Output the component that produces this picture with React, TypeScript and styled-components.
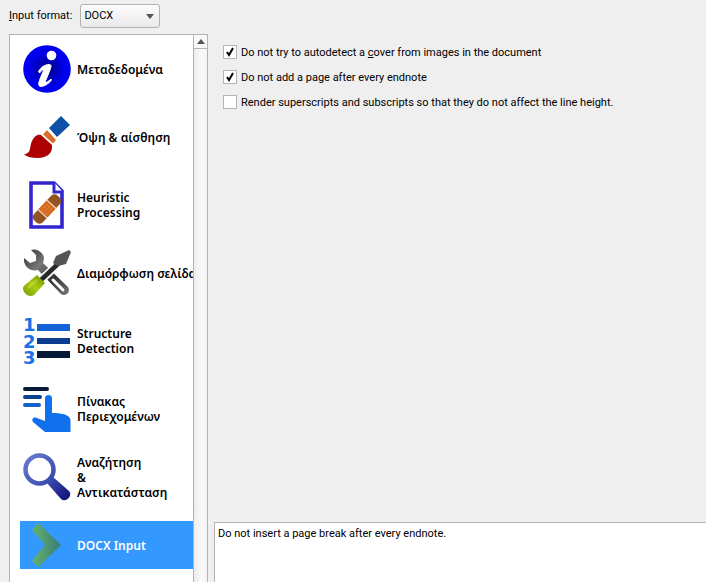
import React, { useState } from "react";
import styled, { createGlobalStyle } from "styled-components";

const GlobalStyle = createGlobalStyle`
  * { box-sizing: border-box; }
  body {
    margin: 0;
    overflow: hidden;
    background: #efefef;
    color: #000;
    font: 11px/16px Roboto, "DejaVu Sans", sans-serif;
  }
`;

const Dialog = styled.div`
  display: flex;
  flex-direction: column;
  height: 100vh;
`;

const FormatBar = styled.div`
  display: flex;
  align-items: center;
  gap: 8px;
  height: 34px;
  padding: 0 9px 2px;
`;

const SelectBox = styled.div`
  display: grid;
  align-items: center;
  width: 80px;
  > * { grid-area: 1 / 1; }
  svg { justify-self: end; margin-right: 6px; pointer-events: none; }
`;

const Select = styled.select`
  appearance: none;
  width: 100%;
  height: 24px;
  padding: 0 3px;
  border: 1px solid #b2b2b2;
  border-radius: 3px;
  background: linear-gradient(#fcfcfc, #eaeaea);
  color: #000;
  font: inherit;
`;

const Body = styled.div`
  display: flex;
  flex: 1;
  min-height: 0;
  gap: 6px;
  padding-left: 9px;
`;

const Sidebar = styled.div`
  display: flex;
  flex: none;
  width: 199px;
  border: 1px solid #b4b4b4;
  border-bottom: 0;
  background: #fff;
`;

const PageList = styled.nav`
  display: flex;
  flex: 1;
  flex-direction: column;
  gap: 20px;
  min-width: 0;
  padding: 10px 0 0 10px;
  overflow: hidden;
`;

const PageButton = styled.button<{ $selected: boolean }>`
  display: flex;
  flex: none;
  align-items: center;
  gap: 6px;
  height: 48px;
  padding: 0 0 0 3px;
  border: 0;
  background: ${({ $selected }) => ($selected ? "#3399ff" : "transparent")};
  color: ${({ $selected }) => ($selected ? "#fff" : "#000")};
  font: 600 12px/15px "Noto Sans", "Open Sans", sans-serif;
  text-align: left;
  white-space: pre;
  svg { flex: none; overflow: visible; }
`;

const ScrollBar = styled.div`
  flex: none;
  width: 14px;
  border-left: 1px solid #b4b4b4;
  background: linear-gradient(to right, #ececec, #fafafa 60%, #f4f4f4);
`;

const ScrollButton = styled.button`
  display: flex;
  align-items: center;
  justify-content: center;
  width: 100%;
  height: 14px;
  padding: 0;
  border: 0;
  border-bottom: 1px solid #b4b4b4;
  background: #f8f8f8;
`;

const Content = styled.main`
  display: flex;
  flex: 1;
  flex-direction: column;
  justify-content: space-between;
  min-width: 0;
`;

const Options = styled.div`
  display: flex;
  flex-direction: column;
  gap: 9px;
  padding: 11px 9px;
`;

const Option = styled.label`
  display: flex;
  align-items: flex-start;
  gap: 4px;
`;

const CheckBox = styled.span`
  display: grid;
  place-items: center;
  > * { grid-area: 1 / 1; }
  svg { pointer-events: none; }
`;

const CheckInput = styled.input`
  appearance: none;
  width: 14px;
  height: 14px;
  margin: 0;
  border: 1px solid #b4b4b4;
  background: #fff;
`;

const HelpText = styled.section`
  height: 60px;
  padding: 3px;
  border: 1px solid #b4b4b4;
  border-width: 1px 0 0 1px;
  background: #fff;
`;

const icon = { width: 48, height: 48, viewBox: "0 0 48 48", "aria-hidden": true };

const InfoIcon = () => (
  <svg {...icon}>
    <radialGradient id="info"><stop stopColor="#00007c" /><stop offset=".75" stopColor="#0000ee" /></radialGradient>
    <circle cx="24" cy="24" r="23.8" fill="url(#info)" />
    <circle cx="28.5" cy="10.5" r="4.8" fill="#fff" />
    <path d="M15.500 26.500C18 22 22 19.500 26.500 19.500C29 20 28 22 27 25L22.500 36C22 38.500 25 37 28 34L28.500 35C25.500 39 21 41.500 17.500 41.500C15 41 15.500 38 17 34L20.500 25.500C20.500 24 19 25 16.500 28Z" fill="#fff" stroke="#fff" strokeLinejoin="round" />
  </svg>
);

const BrushIcon = () => (
  <svg {...icon}>
    <path d="M38 3L47 12L34 24L26 15Z" fill="#0d50a5" />
    <path d="M24 17L33 27L30 30.500L20 21.500Z" fill="#dc6d28" />
    <path d="M18 22L29 32C30 40 24 45 15 45C9 45 4 44 1 41.500C9 40 6 34 9 28C11 24 14 21 18 22Z" fill="#ad0000" />
  </svg>
);

const BandageIcon = () => (
  <svg {...icon}>
    <path d="M8 2H31L39 10V46H8Z" fill="#fff" stroke="#3426cf" strokeWidth="3.600" />
    <path d="M31 1V11H40" fill="#fff" stroke="#3426cf" strokeWidth="3" />
    <g transform="rotate(-47 24 28)">
      <rect x="7" y="22" width="34" height="12" rx="4.500" fill="#925521" />
      <rect x="18" y="22" width="12" height="12" fill="#d96a20" />
      <path d="M17.500 21V35M30.500 21V35" stroke="#f4d8bc" strokeWidth="1.200" />
      <path d="M20 25h9M20 28h9M20 31h9" stroke="#ed9856" strokeDasharray="1 2" />
    </g>
  </svg>
);

const ToolsIcon = () => (
  <svg {...icon}>
    <linearGradient id="steel" x2="1" y2="1"><stop stopColor="#333" /><stop offset=".35" stopColor="#777" /><stop offset=".65" stopColor="#333" /><stop offset="1" stopColor="#777" /></linearGradient>
    <linearGradient id="handle" x1="0" y1="1" x2="1" y2="0"><stop stopColor="#759c00" /><stop offset=".5" stopColor="#aacc12" /><stop offset="1" stopColor="#678f00" /></linearGradient>
    <path d="M8 1C13 -1 21 3 21 10L20 14L45 38C48 43 43 48 38 45L15 21C8 23 0 18 1 9L7 14L13 12L13 6Z" fill="url(#steel)" />
    <path d="M30 31L40 41" stroke="#fff" strokeWidth="3" strokeLinecap="round" />
    <path d="M17 32L33 17" stroke="#fff" strokeWidth="8" />
    <path d="M18 31L37 13" stroke="#292929" strokeWidth="4.500" />
    <path d="M33 7L46 1L48 3L43 15L35 17L30 14Z" fill="#555" />
    <path d="M14 26L22 34L11 46C7 49 0 45 0 39C0 37 2 36 3 35Z" fill="url(#handle)" />
    <path d="M5 39L14 31" stroke="#d2e760" strokeWidth="2" opacity=".5" />
  </svg>
);

const NumberText = styled.text`
  font: 700 18px "DejaVu Sans", sans-serif;
`;

const NumberedListIcon = () => (
  <svg {...icon}>
    <g fill="#1b70e8">
      <NumberText x="0" y="14">1</NumberText>
      <NumberText x="0" y="31">2</NumberText>
      <NumberText x="0" y="47">3</NumberText>
    </g>
    <path d="M14 7h33v7H14z" fill="#1262d7" />
    <path d="M14 21h33v6H14z" fill="#0b3c8f" />
    <path d="M14 34h33v7H14z" fill="#061936" />
  </svg>
);

const ContentsIcon = () => (
  <svg {...icon}>
    <g strokeWidth="4" strokeLinecap="round">
      <path d="M2 4H24" stroke="#061a38" />
      <path d="M2 12H17" stroke="#0c428d" />
      <path d="M2 20H16" stroke="#1262cc" />
    </g>
    <path d="M22 13C22 9 29 9 29 13V28C37 28 47 29 47.500 35V47H22L10 37C8 34 11 31.500 14 33L22 36Z" fill="#1071ee" />
  </svg>
);

const SearchIcon = () => (
  <svg {...icon}>
    <linearGradient id="lens" gradientUnits="userSpaceOnUse" x1="4" y1="4" x2="44" y2="44"><stop stopColor="#6678cc" /><stop offset=".55" stopColor="#3d50b2" /><stop offset="1" stopColor="#15157c" /></linearGradient>
    <circle cx="16.5" cy="16.5" r="14" fill="none" stroke="url(#lens)" strokeWidth="4.500" />
    <path d="M24 30L30 24L46 38C50 43 43 50 38 46Z" fill="url(#lens)" />
  </svg>
);

const ChevronIcon = () => (
  <svg {...icon}>
    <linearGradient id="chevron"><stop stopColor="#65b36c" /><stop offset="1" stopColor="#387b78" /></linearGradient>
    <path d="M9 9L15.500 2L38 24L15.500 46L9 39.500L22 24Z" fill="url(#chevron)" />
  </svg>
);

const pages = [
  { label: "Μεταδεδομένα", Icon: InfoIcon },
  { label: "Όψη & αίσθηση", Icon: BrushIcon },
  { label: "Heuristic\nProcessing", Icon: BandageIcon },
  { label: "Διαμόρφωση σελίδα", Icon: ToolsIcon },
  { label: "Structure\nDetection", Icon: NumberedListIcon },
  { label: "Πίνακας\nΠεριεχομένων", Icon: ContentsIcon },
  { label: "Αναζήτηση\n&\nΑντικατάσταση", Icon: SearchIcon },
  { label: "DOCX Input", Icon: ChevronIcon },
];

function CheckOption({ initial = false, children }: { initial?: boolean; children: React.ReactNode }) {
  const [checked, setChecked] = useState(initial);
  return (
    <Option>
      <CheckBox>
        <CheckInput type="checkbox" checked={checked} onChange={(e) => setChecked(e.target.checked)} />
        {checked && (
          <svg width="8" height="10" viewBox="0 0 8 10" aria-hidden="true">
            <path d="M1 5L3 8L7 1" fill="none" stroke="#000" strokeWidth="2" />
          </svg>
        )}
      </CheckBox>
      <span>{children}</span>
    </Option>
  );
}

export default function App() {
  const [current, setCurrent] = useState(pages.length - 1);
  return (
    <Dialog>
      <GlobalStyle />
      <FormatBar>
        <label htmlFor="format"><u>I</u>nput format:</label>
        <SelectBox>
          <Select id="format" defaultValue="DOCX"><option>DOCX</option></Select>
          <svg width="8" height="5" viewBox="0 0 8 5" aria-hidden="true"><path d="M0 0H8L4 5Z" fill="#555" /></svg>
        </SelectBox>
      </FormatBar>
      <Body>
        <Sidebar>
          <PageList>
            {pages.map(({ label, Icon }, i) => (
              <PageButton key={label} type="button" $selected={i === current} onClick={() => setCurrent(i)}>
                <Icon />
                <span>{label}</span>
              </PageButton>
            ))}
          </PageList>
          <ScrollBar>
            <ScrollButton type="button" aria-label="Scroll up">
              <svg width="8" height="5" viewBox="0 0 8 5" aria-hidden="true"><path d="M0 5H8L4 0Z" fill="#555" /></svg>
            </ScrollButton>
          </ScrollBar>
        </Sidebar>
        <Content>
          <Options>
            <CheckOption initial>Do not try to autodetect a <u>c</u>over from images in the document</CheckOption>
            <CheckOption initial>Do not add a page after every endnote</CheckOption>
            <CheckOption>Render superscripts and subscripts so that they do not affect the line height.</CheckOption>
          </Options>
          <HelpText>Do not insert a page break after every endnote.</HelpText>
        </Content>
      </Body>
    </Dialog>
  );
}
